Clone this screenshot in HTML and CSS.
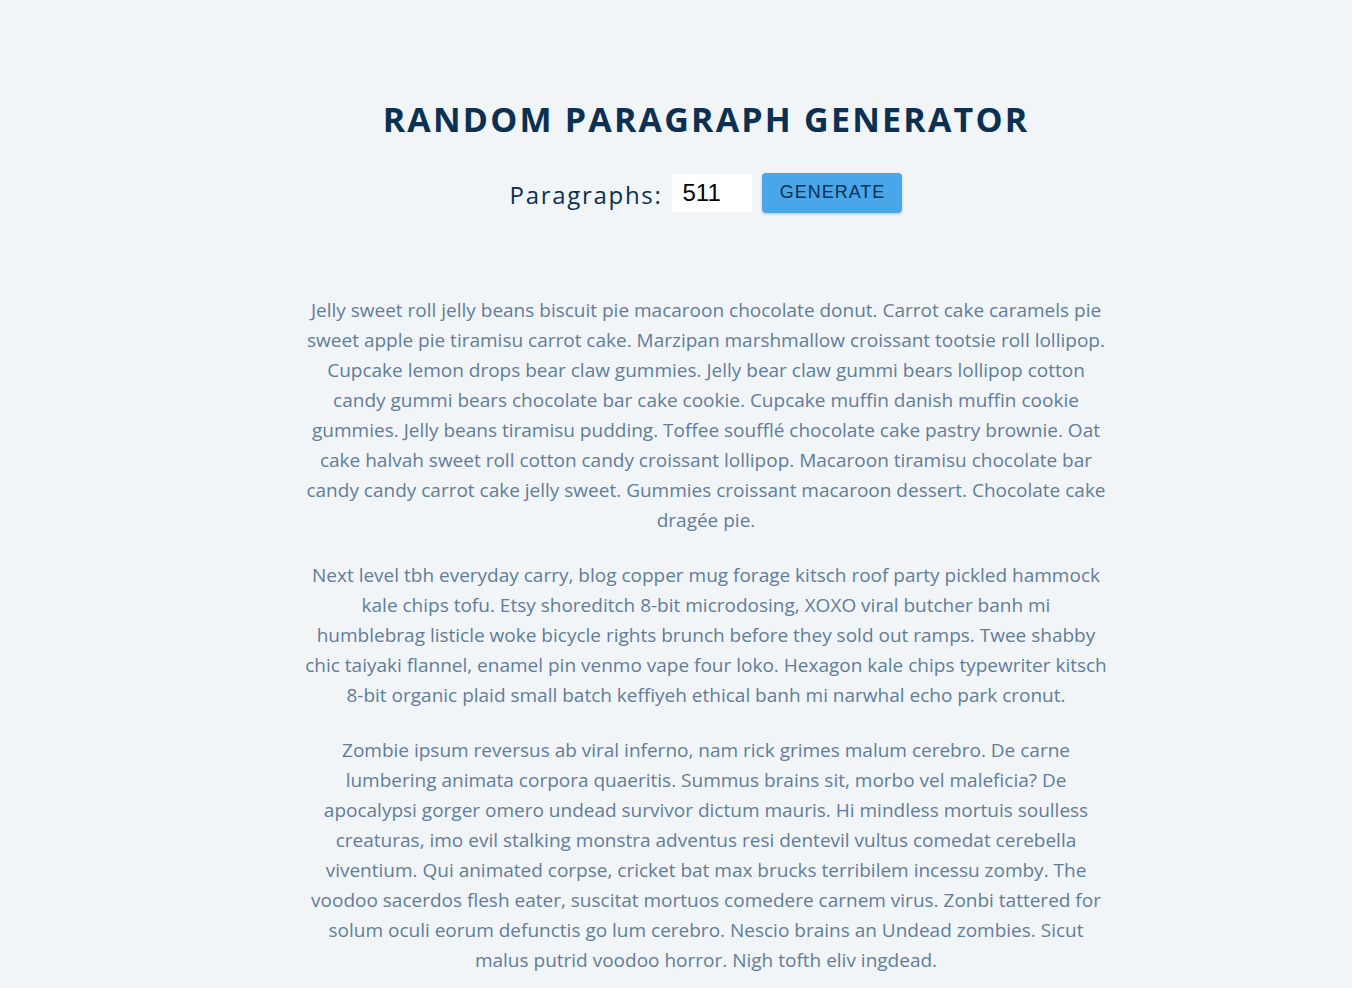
FILE: index.html
```html
<!DOCTYPE html>
<html lang="en">
<head>
<meta charset="utf-8">
<title>Random Paragraph Generator</title>
<link rel="stylesheet" href="styles.css">
</head>
<body>
<div class="page">
  <section class="section-center">
    <h3 class="title">Random Paragraph Generator</h3>
    <form class="lorem-form">
      <label class="label" for="amount">paragraphs:</label>
      <input class="amount" type="number" id="amount" value="511">
      <button class="btn" type="button">generate</button>
    </form>
    <article class="lorem-text">
      <p>Jelly sweet roll jelly beans biscuit pie macaroon chocolate donut. Carrot cake caramels pie sweet apple pie tiramisu carrot cake. Marzipan marshmallow croissant tootsie roll lollipop. Cupcake lemon drops bear claw gummies. Jelly bear claw gummi bears lollipop cotton candy gummi bears chocolate bar cake cookie. Cupcake muffin danish muffin cookie gummies. Jelly beans tiramisu pudding. Toffee soufflé chocolate cake pastry brownie. Oat cake halvah sweet roll cotton candy croissant lollipop. Macaroon tiramisu chocolate bar candy candy carrot cake jelly sweet. Gummies croissant macaroon dessert. Chocolate cake dragée pie.</p>
      <p>Next level tbh everyday carry, blog copper mug forage kitsch roof party pickled hammock kale chips tofu. Etsy shoreditch 8-bit microdosing, XOXO viral butcher banh mi humblebrag&nbsp;listicle woke bicycle rights brunch before they sold out ramps. Twee shabby chic taiyaki flannel, enamel pin venmo vape four loko. Hexagon kale chips typewriter kitsch 8-bit organic plaid small batch keffiyeh ethical banh mi narwhal echo park cronut.</p>
      <p>Zombie ipsum reversus ab viral inferno, nam rick grimes malum cerebro. De carne lumbering animata corpora quaeritis. Summus brains sit, morbo vel maleficia? De apocalypsi gorger omero undead survivor dictum mauris. Hi mindless mortuis soulless creaturas, imo evil stalking monstra adventus resi dentevil vultus comedat cerebella viventium. Qui animated corpse, cricket bat max brucks terribilem incessu zomby. The voodoo sacerdos flesh eater, suscitat mortuos comedere carnem virus. Zonbi tattered for solum oculi eorum defunctis go lum cerebro. Nescio brains an Undead zombies. Sicut malus putrid voodoo horror. Nigh tofth eliv ingdead.</p>
    </article>
  </section>
</div>
</body>
</html>
```

FILE: styles.css
```css
* { box-sizing: border-box; margin: 0; padding: 0; }
html, body { background: #f1f5f8; }
body {
  font-family: "Open Sans", "Noto Sans", sans-serif;
  font-size: 20px;
  line-height: 1.5;
  color: #102a43;
}
.page {
  padding-left: 60px;
}
.section-center {
  width: 90vw;
  max-width: 806px;
  margin: 0 auto;
  padding-top: 98px;
  text-align: center;
}
.title {
  font-size: 34px;
  font-weight: 700;
  letter-spacing: 2.2px;
  text-transform: uppercase;
  color: #0b3052;
  line-height: 1.25;
}
.lorem-form {
  display: flex;
  justify-content: center;
  align-items: center;
  margin-top: 32px;
  margin-bottom: 82px;
}
.label {
  font-size: 24px;
  letter-spacing: 1.7px;
  text-transform: capitalize;
  color: #0b3052;
  padding-top: 4px;
}
.amount {
  width: 80px;
  height: 38px;
  margin: 0 10px;
  padding: 0 10px;
  border: none;
  border-radius: 4px;
  background: #fff;
  font-family: "Liberation Sans", Arial, sans-serif;
  font-size: 24px;
  color: #000;
  -moz-appearance: textfield;
}
.amount::-webkit-inner-spin-button,
.amount::-webkit-outer-spin-button { -webkit-appearance: none; margin: 0; }
.btn {
  width: 140px;
  height: 40px;
  border: none;
  border-radius: 4px;
  background: #49a6e9;
  color: #0b3052;
  font-family: "Liberation Sans", Arial, sans-serif;
  font-size: 18px;
  letter-spacing: 1px;
  text-transform: uppercase;
  box-shadow: 0 1px 3px rgba(0,0,0,0.2);
  cursor: pointer;
}
.lorem-text {
  font-size: 19px;
  line-height: 30px;
}
.lorem-text p {
  margin-bottom: 25px;
  color: #617d98;
}
```
